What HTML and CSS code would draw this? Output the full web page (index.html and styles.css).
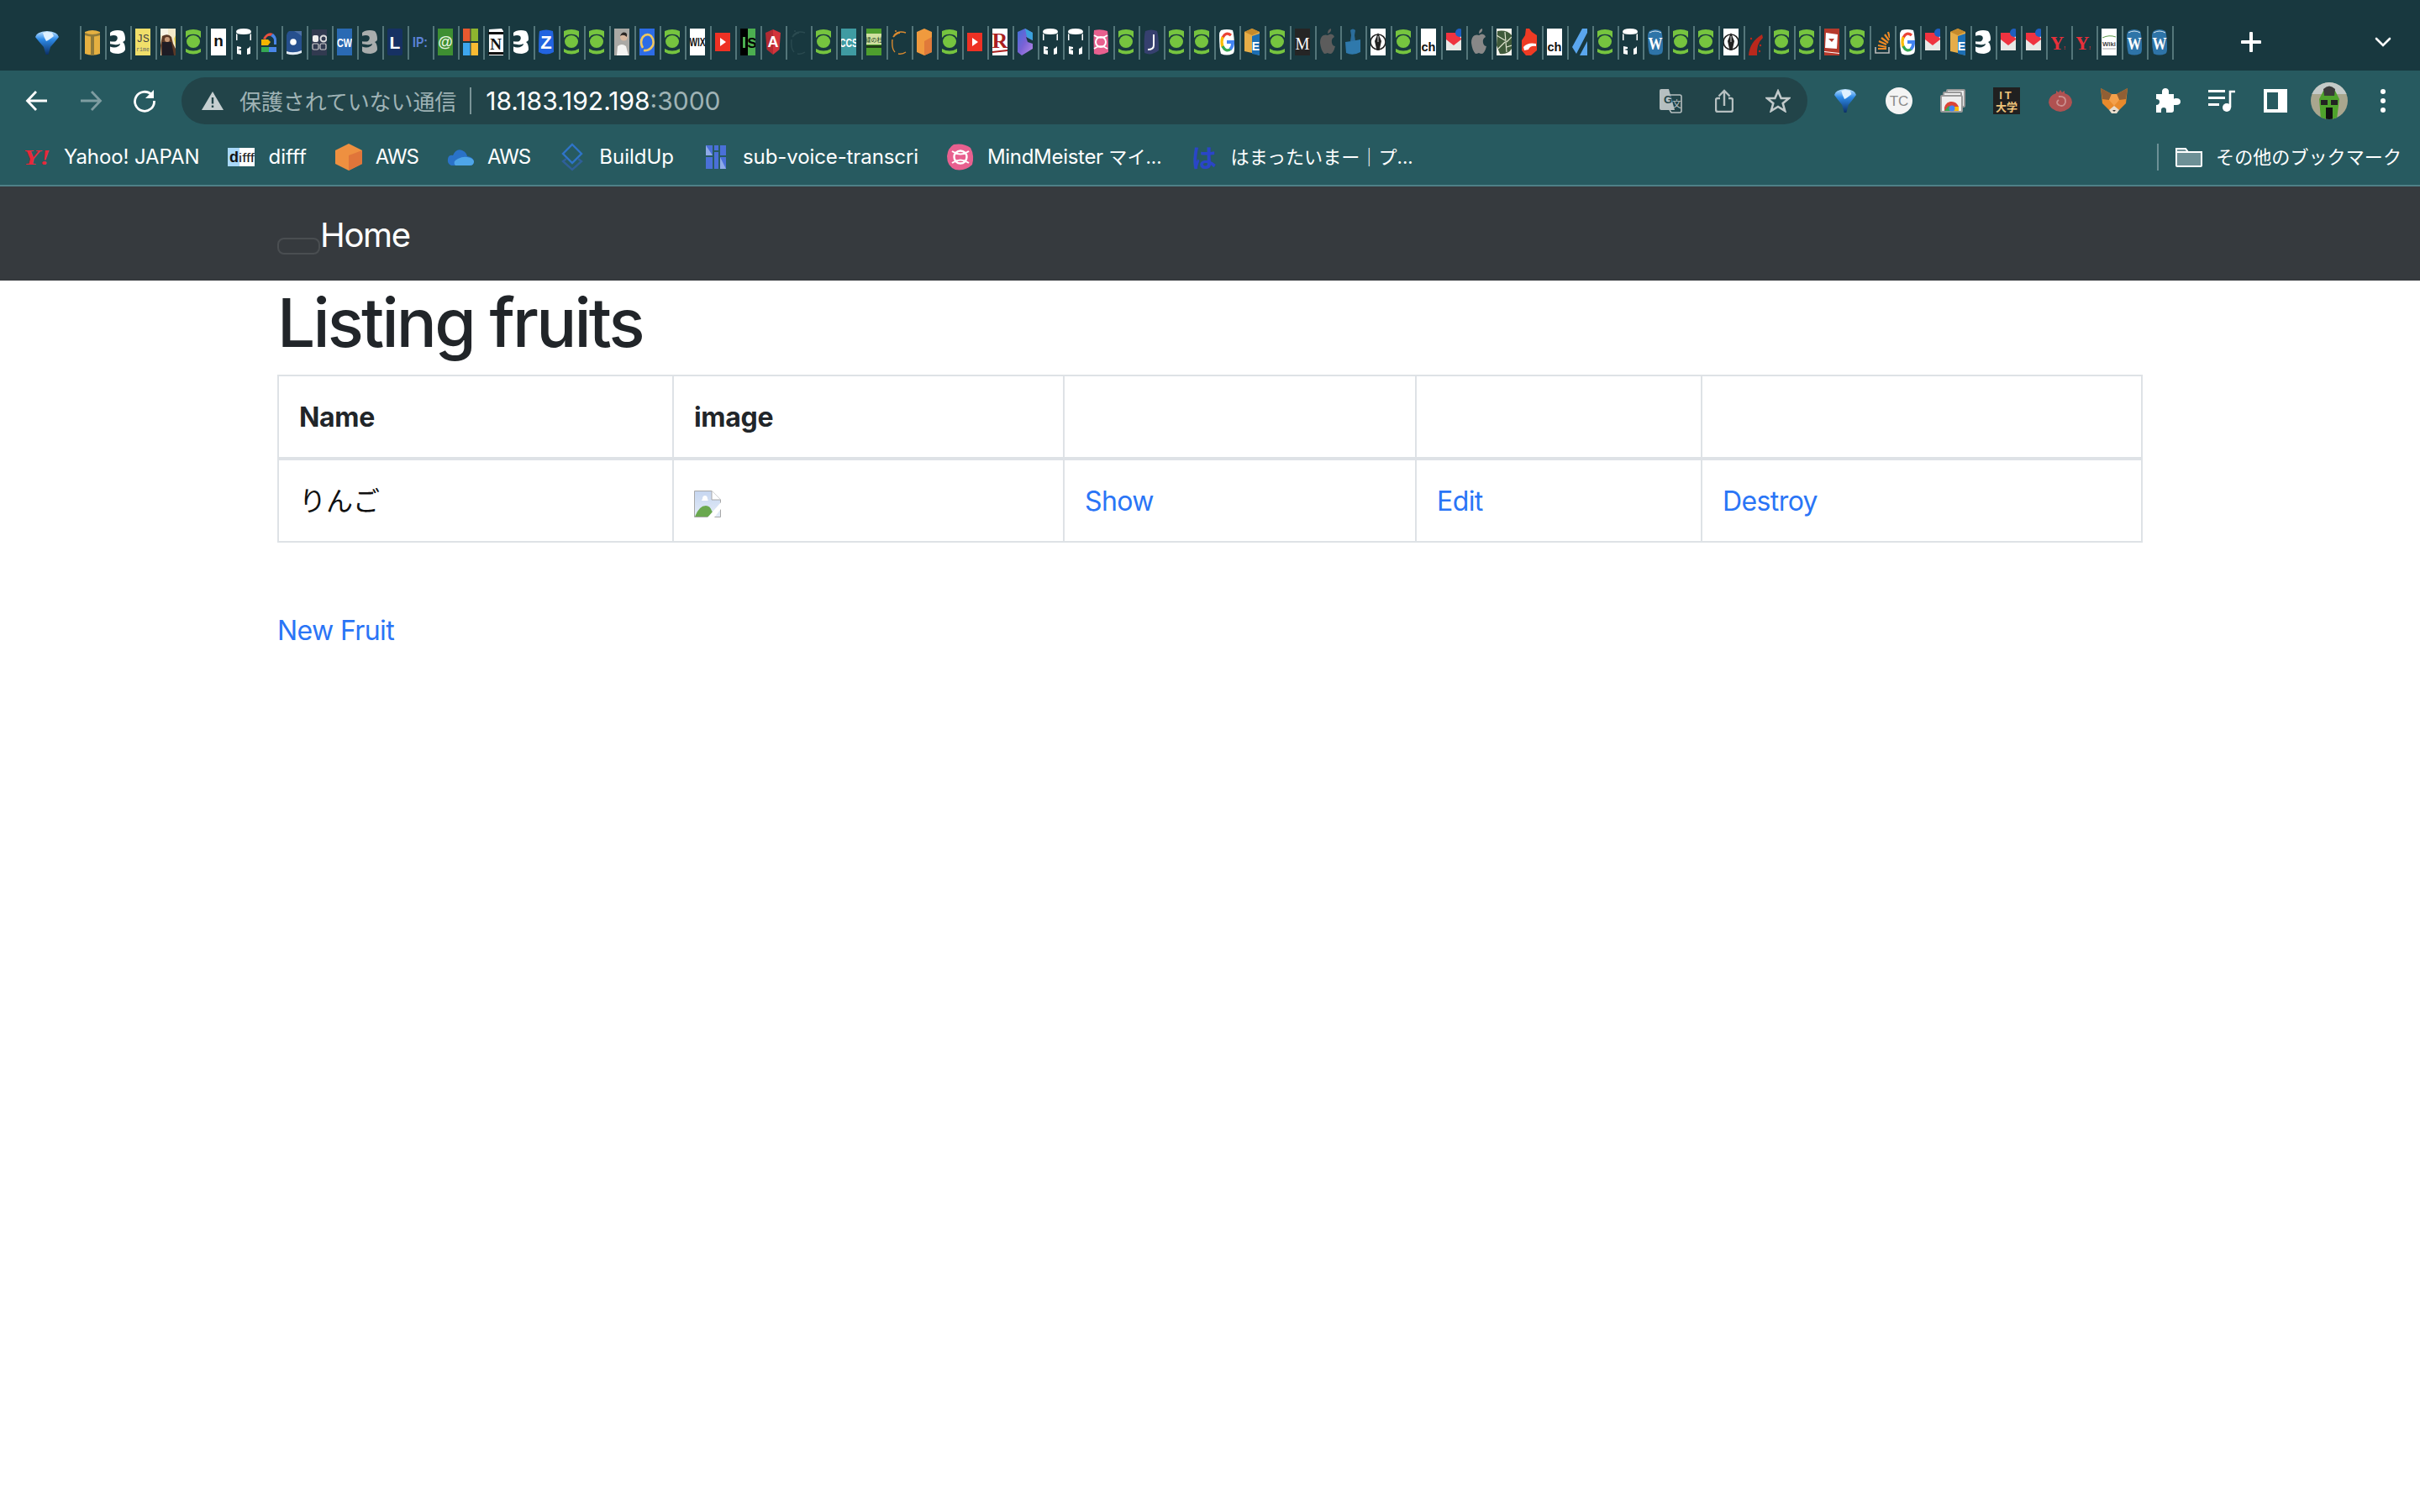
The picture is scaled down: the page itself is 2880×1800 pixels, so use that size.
FILE: index.html
```html
<!DOCTYPE html>
<html lang="ja">
<head>
<meta charset="utf-8">
<title>Listing fruits</title>
<link rel="stylesheet" href="styles.css">
</head>
<body>
<svg class="defs" aria-hidden="true">
<defs>
<linearGradient id="gemG" x1="0" y1="0" x2="0" y2="1"><stop offset="0" stop-color="#bfe3ff"/><stop offset=".35" stop-color="#2e8be8"/><stop offset="1" stop-color="#0b2f66"/></linearGradient>
<linearGradient id="bingG" x1="0" y1="0" x2="1" y2="1"><stop offset="0" stop-color="#3f6fd8"/><stop offset=".5" stop-color="#7a62d6"/><stop offset="1" stop-color="#b78ae6"/></linearGradient>
<linearGradient id="docG" x1="0" y1="0" x2="0" y2="1"><stop offset="0" stop-color="#c6d6f0"/><stop offset="1" stop-color="#e4ecf8"/></linearGradient>
<symbol id="gem" viewBox="0 0 28 30"><path fill="url(#gemG)" d="M0 8Q1 2 14 1Q27 2 28 8Q25 12 18 20L15.5 29H12.5L10 20Q3 12 0 8Z"/><path fill="#dff1ff" d="M9 3Q14 1 20 3L22 7Q16 12 13 13Q10 8 9 3Z"/></symbol>
<symbol id="box" viewBox="0 0 18 32"><path fill="#e5b041" d="M0 4Q9 0 18 4V30Q9 33 0 30Z"/><path fill="#8f7a3a" d="M0 5Q9 9 18 5V8Q14 9 11 9.500V32H7V9.500Q4 9 0 8Z"/></symbol>
<symbol id="three" viewBox="0 0 18 32"><path fill="currentColor" d="M3 3Q9 1 15 3Q18 6 18 13Q18 15 15 16Q18 18 18 25Q17 29 10 30Q2 30 0 27V5Q1 4 3 3Z"/><path fill="#18383f" d="M-1 9Q5 7 8 9Q10 12 7 15Q4 16 -1 15ZM-1 21Q5 24 10 21Q12 20 12 18Q8 20 5 19L-1 18Z"/></symbol>
<symbol id="js" viewBox="0 0 18 32"><rect width="18" height="32" fill="#f0df6a"/><text class="ft fm" x="9" y="16" font-size="13" fill="#444" text-anchor="middle">JS</text><text class="ft fm" x="9" y="27" font-size="6.500" fill="#666" text-anchor="middle">rime</text></symbol>
<symbol id="photo1" viewBox="0 0 18 32"><rect width="18" height="32" fill="#f2e9c8"/><rect y="0" width="9" height="8" fill="#f8f4e4"/><path fill="#5b3a26" d="M2 9Q9 5 13 10L15 18L18 24V32H1L0 20Z"/><path fill="#1e1c24" d="M2 16H13L16 32H2Z"/><circle cx="8" cy="13" r="3" fill="#c89a78"/><path fill="#e8d048" d="M16 12L18 22V8Z"/></symbol>
<symbol id="frog" viewBox="0 0 18 32"><path fill="#76c43f" d="M0 3Q9-1 18 3V11L15 8Q9 5.500 3 8L0 11Z"/><ellipse cx="9" cy="15.500" rx="8" ry="7.500" fill="#76c43f"/><path fill="#76c43f" d="M0 24Q9 29 18 24V28Q9 33 0 28Z"/></symbol>
<symbol id="n" viewBox="0 0 18 32"><rect width="18" height="32" fill="#fff"/><text class="ft fb" x="9" y="21" font-size="19" fill="#111" text-anchor="middle">n</text></symbol>
<symbol id="gh" viewBox="0 0 18 32"><path fill="#fff" d="M0 4Q0 0 9 0Q18 0 18 4Q18 7 9 7Q0 7 0 4Z"/><path fill="#fff" d="M0 6L1.500 7V14H0ZM16.500 7L18 6V14H16.500ZM1 21L6 22V24L2 25L6 26V31L1 30ZM17 21V30L13 31V24Q15 24 17 21Z"/></symbol>
<symbol id="gcloud" viewBox="0 0 18 32"><path fill="#e8503f" d="M2 12Q7 3 14 6L11 9Q7 8 5 13Z"/><path fill="#4a86e8" d="M14 6Q18 9 18 14V19H15V14Q15 11 11 9Z"/><path fill="#f4b400" d="M0 13H8L11 16L8 20H0Z"/><path fill="#34a853" d="M0 22H9V28H0Z"/><path fill="#4a86e8" d="M9 22H18V28H9Z"/></symbol>
<symbol id="ring6" viewBox="0 0 18 32"><path fill="#26508e" d="M3 3H18V28Q9 32 0 28V8Q0 5 3 3Z"/><path fill="#e6eef6" d="M0 27Q9 30 18 26V29Q9 33 0 30Z"/><path fill="#4c6fa5" d="M9 3H18V9Q13 5 9 3Z"/><circle cx="8" cy="16" r="3.800" fill="#fff"/></symbol>
<symbol id="qs" viewBox="0 0 18 32"><rect y="1" width="18" height="31" fill="#313a50"/><rect x="1" y="8" width="7" height="8" rx="2" fill="#eee"/><circle cx="14" cy="12" r="3.500" fill="none" stroke="#ddd" stroke-width="2"/><rect x="1" y="18" width="7" height="7" rx="1.500" fill="none" stroke="#ccc" stroke-width="1.200"/><rect x="10" y="18" width="7" height="7" rx="1.500" fill="none" stroke="#ccc" stroke-width="1.200"/></symbol>
<symbol id="cw" viewBox="0 0 18 32"><rect width="18" height="32" fill="#2a6ab4"/><text class="ft fb" x="9" y="22" font-size="15" fill="#fff" text-anchor="middle" textLength="18" lengthAdjust="spacingAndGlyphs">CW</text></symbol>
<symbol id="l" viewBox="0 0 18 32"><rect width="18" height="32" rx="2" fill="#163163"/><text class="ft fb" x="9" y="24" font-size="21" fill="#fff" text-anchor="middle">L</text></symbol>
<symbol id="ip" viewBox="0 0 18 32"><text class="ft fb" x="9" y="22" font-size="17" fill="#5b82d8" text-anchor="middle" textLength="18" lengthAdjust="spacingAndGlyphs">IP:</text></symbol>
<symbol id="at" viewBox="0 0 18 32"><rect width="18" height="32" fill="#3e8f32"/><text class="ft fb" x="9" y="22" font-size="18" fill="#e6f3df" text-anchor="middle">@</text></symbol>
<symbol id="ms" viewBox="0 0 18 32"><rect width="8.500" height="15" fill="#e8592f"/><rect x="9.500" width="8.500" height="15" fill="#8fb52f"/><rect y="17" width="8.500" height="15" fill="#3ea6ee"/><rect x="9.500" y="17" width="8.500" height="15" fill="#f8bb33"/></symbol>
<symbol id="notion" viewBox="0 0 18 32"><path fill="#fff" d="M1 1L16 0L18 3V32H1Z"/><path fill="#111" d="M0 4H18V7H0ZM0 28H18V31H0Z"/><text class="ft fs" x="9" y="25" font-size="19" fill="#111" text-anchor="middle" font-weight="700">N</text></symbol>
<symbol id="z" viewBox="0 0 18 32"><path fill="#2264e0" d="M1 3Q9 0 17 3Q18 8 18 28Q9 33 0 28Q0 8 1 3Z"/><text class="ft fb" x="9" y="24" font-size="22" fill="#fff" text-anchor="middle">Z</text></symbol>
<symbol id="person" viewBox="0 0 18 32"><rect width="18" height="32" fill="#aaa9a5"/><path fill="#f4f4f2" d="M3 32L4 21Q9 17 14 21L17 32Z"/><circle cx="11.500" cy="10" r="4.500" fill="#d8b8a0"/><path fill="#2a2624" d="M7 9Q9 3 14 5Q16 7 15 10Q11 6 7 9Z"/></symbol>
<symbol id="chat" viewBox="0 0 18 32"><rect width="18" height="32" fill="#2d6ce6"/><path fill="none" stroke="#efc75e" stroke-width="2.600" d="M4 23Q0 16 4 10Q9 5 14 9Q18 14 16 20Q12 27 5 26"/></symbol>
<symbol id="wix" viewBox="0 0 18 32"><rect width="18" height="32" fill="#fff"/><text class="ft fb" x="9" y="21" font-size="15" fill="#111" text-anchor="middle" textLength="19" lengthAdjust="spacingAndGlyphs">WIX</text></symbol>
<symbol id="yt" viewBox="0 0 18 32"><rect y="5" width="18" height="22" fill="#ee3124"/><path fill="#fff" d="M6 11L13 16L6 21Z"/></symbol>
<symbol id="is" viewBox="0 0 18 32"><rect width="9" height="32" fill="#000"/><rect x="9" width="9" height="32" fill="#4caf50"/><rect x="3" y="10" width="3" height="13" fill="#4caf50"/><text class="ft fb" x="14" y="23" font-size="17" fill="#000" text-anchor="middle">S</text></symbol>
<symbol id="ang" viewBox="0 0 18 32"><path fill="#d3343c" d="M9 1L18 5L16.500 25L9 31Z"/><path fill="#b32a32" d="M9 1L0 5L1.500 25L9 31Z"/><text class="ft fb" x="9" y="22" font-size="18" fill="#fff" text-anchor="middle">A</text></symbol>
<symbol id="moon" viewBox="0 0 18 32"><path fill="none" stroke="currentColor" stroke-width="1.400" d="M3 8Q8 2 17 5M1 13Q0 24 4 28M8 30Q13 31 17 28"/><circle cx="5" cy="3" r="1" fill="currentColor"/><path fill="none" stroke="currentColor" stroke-width="2" d="M2 10Q6 5 10 5"/></symbol>
<symbol id="cc" viewBox="0 0 18 32"><rect width="18" height="32" fill="#3f9ba2"/><text class="ft fb" x="9" y="22" font-size="15" fill="#fff" text-anchor="middle" textLength="22" lengthAdjust="spacingAndGlyphs">CCS</text></symbol>
<symbol id="book" viewBox="0 0 18 32"><rect width="18" height="32" fill="#4e9e2e"/><rect y="6" width="18" height="13" fill="#cfe0a0"/><rect y="20" width="18" height="3" fill="#1f3c16"/><text class="ft fc" x="9" y="16" font-size="7" fill="#20401a" text-anchor="middle">緑の杜</text></symbol>
<symbol id="orange" viewBox="0 0 18 32"><path fill="#f09a3e" d="M9 0L18 4V28L9 32L0 28V4Z"/><path fill="#e07a3a" d="M9 15L18 10V28L9 32Z"/></symbol>
<symbol id="r" viewBox="0 0 18 32"><rect width="18" height="32" fill="#fff"/><text class="ft fs" x="9" y="23" font-size="26" fill="#a91f1f" font-weight="700" text-anchor="middle">R</text><path fill="#a91f1f" d="M0 27L18 25V27L0 29Z"/></symbol>
<symbol id="bing" viewBox="0 0 18 32"><path fill="url(#bingG)" d="M9 0L18 5V14L10 10L12 16L18 18V24L5 32L0 28V4Z"/><path fill="#3aa0dc" d="M9 0L18 5V14L11 10Z"/></symbol>
<symbol id="mm" viewBox="0 0 18 32"><path fill="#e8608f" d="M1 2Q9 0 17 3Q18 8 18 28Q9 33 1 30Q0 10 1 2Z"/><circle cx="9" cy="16" r="6" fill="none" stroke="#fff" stroke-width="2"/><path fill="none" stroke="#fff" stroke-width="1.600" d="M1 8Q9 14 17 8M1 24Q9 18 17 24"/></symbol>
<symbol id="j" viewBox="0 0 18 32"><path fill="#36406f" d="M2 3Q9 0 16 3Q18 8 18 26Q9 33 1 29Q0 10 2 3Z"/><path fill="none" stroke="#fff" stroke-width="2" d="M12 7V20Q12 25 5 25"/></symbol>
<symbol id="g" viewBox="0 0 18 32"><path fill="#fff" d="M2 2Q9 0 16 2Q18 8 18 24Q18 29 16 30Q9 33 2 30Q0 24 0 8Q0 4 2 2Z"/><path fill="none" stroke="#ea4335" stroke-width="3.200" d="M14 8Q8 3 4 11"/><path fill="none" stroke="#fbbc05" stroke-width="3.200" d="M4 10Q2 16 4 22"/><path fill="none" stroke="#34a853" stroke-width="3.200" d="M4 21Q8 29 14 24"/><path fill="#4285f4" d="M9 14H18V18Q17 24 14 26L12 23Q14 21 14 18H9Z"/></symbol>
<symbol id="ie" viewBox="0 0 18 32"><path fill="#e6ad48" d="M9 0L18 4V32L9 29L0 27V4Z"/><path fill="#c58a2c" d="M9 8L18 4L9 0L0 4Z"/><path fill="#1d6fb4" d="M9 9L18 6V32L9 30Z"/><text class="ft fb" x="13.500" y="26" font-size="14" fill="#fff" text-anchor="middle">E</text></symbol>
<symbol id="m" viewBox="0 0 18 32"><rect width="18" height="32" fill="#252525"/><text class="ft fs" x="9" y="25" font-size="20" fill="#fff" text-anchor="middle" textLength="17" lengthAdjust="spacingAndGlyphs">M</text></symbol>
<symbol id="apple" viewBox="0 0 18 32"><path fill="currentColor" d="M9 8Q13 5 16 8L17 10Q13 12 14 17Q15 21 18 21Q16 29 13 30Q10 30 9 29Q7 30 5 30Q1 26 0 17Q0 10 4 8Q7 7 9 8ZM9 6Q9 1 13 0Q14 4 9 6Z"/></symbol>
<symbol id="ink" viewBox="0 0 18 32"><path fill="#2b6d9c" d="M6 2Q9-1 12 2L11 8L12 15H6L7 8Z"/><path fill="#2f79ac" d="M0 16Q9 15 18 13V28Q9 33 1 29Z"/></symbol>
<symbol id="pen" viewBox="0 0 18 32"><rect width="18" height="32" fill="#fff"/><circle cx="9" cy="16" r="9" fill="none" stroke="#222" stroke-width="1.600"/><path fill="#222" d="M9 5L13 15L10.500 26H7.500L5 15Z"/><path fill="#fff" d="M8.600 9H9.400V16H8.600Z"/></symbol>
<symbol id="ch" viewBox="0 0 18 32"><rect width="18" height="32" fill="#fff"/><text class="ft fb" x="9" y="27" font-size="15" fill="#111" text-anchor="middle" textLength="17" lengthAdjust="spacingAndGlyphs">ch</text></symbol>
<symbol id="gmail" viewBox="0 0 18 32"><path fill="#e8e8e6" d="M0 5H18V26H0Z"/><path fill="#ef3340" d="M0 5H12L18 12V13L9 20L0 13Z"/><circle cx="16" cy="5" r="5" fill="#1f5fc0"/></symbol>
<symbol id="plant" viewBox="0 0 18 32"><rect width="18" height="32" fill="#f4f3ec"/><path fill="#3f5a3a" d="M1 3Q12 1 18 8V24Q14 31 4 30L0 20Z"/><path fill="none" stroke="#e0e4d0" stroke-width="1.200" d="M0 8L10 14M2 24L10 16M10 4L12 28M18 10L12 16M18 20L12 22"/></symbol>
<symbol id="red" viewBox="0 0 18 32"><path fill="#ee3b24" d="M5 0H9L12 4L18 8V26L11 32H5L0 26V14L4 8Z"/><path fill="#fff" d="M2 22Q7 16 17 18V21Q10 20 8 25L3 26Z"/></symbol>
<symbol id="slash" viewBox="0 0 18 32"><path fill="#5aa6ee" d="M12 0H18V5L5 30L0 22ZM18 15V32H9Z"/></symbol>
<symbol id="w" viewBox="0 0 18 32"><path fill="#2e74a8" d="M2 3Q9-1 16 3Q18 8 18 24Q18 29 16 30Q9 33 2 30Q0 24 0 8Q0 5 2 3Z"/><path fill="none" stroke="#fff" stroke-width=".8" d="M2 5Q9 1 16 5"/><text class="ft fs" x="9" y="25" font-size="22" font-weight="700" fill="#fff" text-anchor="middle" textLength="17" lengthAdjust="spacingAndGlyphs">W</text></symbol>
<symbol id="rails" viewBox="0 0 18 32"><path fill="#b9281c" d="M0 32Q1 16 16 7L17 11Q9 18 10 32Z"/><circle cx="3" cy="12" r="1.200" fill="#b9281c"/><circle cx="14" cy="20" r="1.200" fill="#b9281c"/><circle cx="13" cy="27" r="1.200" fill="#b9281c"/></symbol>
<symbol id="card" viewBox="0 0 18 32"><rect width="18" height="32" fill="#b53a2c"/><path fill="#fff" d="M2 5L16 7L15 24L1 23Z"/><path fill="#b53a2c" d="M5 12H12L9 16Z"/><path fill="#fff" d="M0 27L18 29V30L0 28Z"/></symbol>
<symbol id="so" viewBox="0 0 18 32"><path fill="none" stroke="#f08a24" stroke-width="2.200" d="M4 24H14M4 20L14 22M5 15L14 19M8 11L16 17M12 7L17 14M16 4L18 11"/><path fill="none" stroke="#bbb" stroke-width="1.600" d="M1 22V29H17V22"/></symbol>
<symbol id="yj" viewBox="0 0 18 32"><text class="ft fs" x="7" y="25" font-size="23" font-weight="700" fill="#e8303a" text-anchor="middle">Y</text><text class="ft fs" x="16" y="25" font-size="6" font-weight="700" fill="#e8303a" text-anchor="middle">!</text></symbol>
<symbol id="wiki" viewBox="0 0 18 32"><rect width="18" height="32" fill="#fff"/><path fill="none" stroke="#5a9a48" stroke-width="1" d="M1 11Q9 7 17 10"/><text class="ft fb" x="9" y="21" font-size="7" fill="#444" text-anchor="middle" textLength="16" lengthAdjust="spacingAndGlyphs">Wiki</text><path fill="none" stroke="#aaa" stroke-width="1" d="M1 24H17"/></symbol>
</defs>
</svg>

<header class="chrome">
  <div class="tabstrip">
    <svg class="gem-fav"><use href="#gem"/></svg>
    <div class="tabs">
      <div class="tab"><svg class="fav"><use href="#box"/></svg></div>
      <div class="tab"><svg class="fav white"><use href="#three"/></svg></div>
      <div class="tab"><svg class="fav"><use href="#js"/></svg></div>
      <div class="tab"><svg class="fav"><use href="#photo1"/></svg></div>
      <div class="tab"><svg class="fav"><use href="#frog"/></svg></div>
      <div class="tab"><svg class="fav"><use href="#n"/></svg></div>
      <div class="tab"><svg class="fav"><use href="#gh"/></svg></div>
      <div class="tab"><svg class="fav"><use href="#gcloud"/></svg></div>
      <div class="tab"><svg class="fav"><use href="#ring6"/></svg></div>
      <div class="tab"><svg class="fav"><use href="#qs"/></svg></div>
      <div class="tab"><svg class="fav"><use href="#cw"/></svg></div>
      <div class="tab"><svg class="fav grey"><use href="#three"/></svg></div>
      <div class="tab"><svg class="fav"><use href="#l"/></svg></div>
      <div class="tab"><svg class="fav"><use href="#ip"/></svg></div>
      <div class="tab"><svg class="fav"><use href="#at"/></svg></div>
      <div class="tab"><svg class="fav"><use href="#ms"/></svg></div>
      <div class="tab"><svg class="fav"><use href="#notion"/></svg></div>
      <div class="tab"><svg class="fav white"><use href="#three"/></svg></div>
      <div class="tab"><svg class="fav"><use href="#z"/></svg></div>
      <div class="tab"><svg class="fav"><use href="#frog"/></svg></div>
      <div class="tab"><svg class="fav"><use href="#frog"/></svg></div>
      <div class="tab"><svg class="fav"><use href="#person"/></svg></div>
      <div class="tab"><svg class="fav"><use href="#chat"/></svg></div>
      <div class="tab"><svg class="fav"><use href="#frog"/></svg></div>
      <div class="tab"><svg class="fav"><use href="#wix"/></svg></div>
      <div class="tab"><svg class="fav"><use href="#yt"/></svg></div>
      <div class="tab"><svg class="fav"><use href="#is"/></svg></div>
      <div class="tab"><svg class="fav"><use href="#ang"/></svg></div>
      <div class="tab"><svg class="fav dim"><use href="#moon"/></svg></div>
      <div class="tab"><svg class="fav"><use href="#frog"/></svg></div>
      <div class="tab"><svg class="fav"><use href="#cc"/></svg></div>
      <div class="tab"><svg class="fav"><use href="#book"/></svg></div>
      <div class="tab"><svg class="fav amber"><use href="#moon"/></svg></div>
      <div class="tab"><svg class="fav"><use href="#orange"/></svg></div>
      <div class="tab"><svg class="fav"><use href="#frog"/></svg></div>
      <div class="tab"><svg class="fav"><use href="#yt"/></svg></div>
      <div class="tab"><svg class="fav"><use href="#r"/></svg></div>
      <div class="tab"><svg class="fav"><use href="#bing"/></svg></div>
      <div class="tab"><svg class="fav"><use href="#gh"/></svg></div>
      <div class="tab"><svg class="fav"><use href="#gh"/></svg></div>
      <div class="tab"><svg class="fav"><use href="#mm"/></svg></div>
      <div class="tab"><svg class="fav"><use href="#frog"/></svg></div>
      <div class="tab"><svg class="fav"><use href="#j"/></svg></div>
      <div class="tab"><svg class="fav"><use href="#frog"/></svg></div>
      <div class="tab"><svg class="fav"><use href="#frog"/></svg></div>
      <div class="tab"><svg class="fav"><use href="#g"/></svg></div>
      <div class="tab"><svg class="fav"><use href="#ie"/></svg></div>
      <div class="tab"><svg class="fav"><use href="#frog"/></svg></div>
      <div class="tab"><svg class="fav"><use href="#m"/></svg></div>
      <div class="tab"><svg class="fav apple-d"><use href="#apple"/></svg></div>
      <div class="tab"><svg class="fav"><use href="#ink"/></svg></div>
      <div class="tab"><svg class="fav"><use href="#pen"/></svg></div>
      <div class="tab"><svg class="fav"><use href="#frog"/></svg></div>
      <div class="tab"><svg class="fav"><use href="#ch"/></svg></div>
      <div class="tab"><svg class="fav"><use href="#gmail"/></svg></div>
      <div class="tab"><svg class="fav apple-g"><use href="#apple"/></svg></div>
      <div class="tab"><svg class="fav"><use href="#plant"/></svg></div>
      <div class="tab"><svg class="fav"><use href="#red"/></svg></div>
      <div class="tab"><svg class="fav"><use href="#ch"/></svg></div>
      <div class="tab"><svg class="fav"><use href="#slash"/></svg></div>
      <div class="tab"><svg class="fav"><use href="#frog"/></svg></div>
      <div class="tab"><svg class="fav"><use href="#gh"/></svg></div>
      <div class="tab"><svg class="fav"><use href="#w"/></svg></div>
      <div class="tab"><svg class="fav"><use href="#frog"/></svg></div>
      <div class="tab"><svg class="fav"><use href="#frog"/></svg></div>
      <div class="tab"><svg class="fav"><use href="#pen"/></svg></div>
      <div class="tab"><svg class="fav"><use href="#rails"/></svg></div>
      <div class="tab"><svg class="fav"><use href="#frog"/></svg></div>
      <div class="tab"><svg class="fav"><use href="#frog"/></svg></div>
      <div class="tab"><svg class="fav"><use href="#card"/></svg></div>
      <div class="tab"><svg class="fav"><use href="#frog"/></svg></div>
      <div class="tab"><svg class="fav"><use href="#so"/></svg></div>
      <div class="tab"><svg class="fav"><use href="#g"/></svg></div>
      <div class="tab"><svg class="fav"><use href="#gmail"/></svg></div>
      <div class="tab"><svg class="fav"><use href="#ie"/></svg></div>
      <div class="tab"><svg class="fav white"><use href="#three"/></svg></div>
      <div class="tab"><svg class="fav"><use href="#gmail"/></svg></div>
      <div class="tab"><svg class="fav"><use href="#gmail"/></svg></div>
      <div class="tab"><svg class="fav"><use href="#yj"/></svg></div>
      <div class="tab"><svg class="fav"><use href="#yj"/></svg></div>
      <div class="tab"><svg class="fav"><use href="#wiki"/></svg></div>
      <div class="tab"><svg class="fav"><use href="#w"/></svg></div>
      <div class="tab tab-last"><svg class="fav"><use href="#w"/></svg></div>
    </div>
    <div class="strip-btn plus"><svg width="24" height="24" viewBox="0 0 24 24"><path d="M12 1.500V22.500M1.500 12H22.500" stroke="#fff" stroke-width="4" stroke-linecap="round"/></svg></div>
    <div class="strip-btn chev"><svg width="20" height="12" viewBox="0 0 20 12"><path d="M2 2L10 10L18 2" fill="none" stroke="#fff" stroke-width="2.600" stroke-linecap="round"/></svg></div>
  </div>

  <div class="toolbar">
    <div class="tb-btn"><svg width="28" height="26" viewBox="0 0 28 26"><path d="M26 13H3M13 2L2.500 13L13 24" fill="none" stroke="#fff" stroke-width="2.800"/></svg></div>
    <div class="tb-btn"><svg width="28" height="26" viewBox="0 0 28 26"><path d="M2 13H25M15 2L25.500 13L15 24" fill="none" stroke="#7f9da1" stroke-width="2.800"/></svg></div>
    <div class="tb-btn"><svg width="28" height="28" viewBox="0 0 28 28"><path d="M22.500 7A11.500 11.500 0 1 0 25.500 14" fill="none" stroke="#fff" stroke-width="2.800"/><path d="M25 1V11H15Z" fill="#fff"/></svg></div>
    <div class="omnibox">
      <svg class="warn" width="26" height="22" viewBox="0 0 26 22"><path d="M13 0L26 22H0Z" fill="#c6cfd0"/><path d="M11.800 7H14.200V14.500H11.800ZM11.800 16.500H14.200V19H11.800Z" fill="#224449"/></svg>
      <span class="insecure">保護されていない通信</span>
      <span class="omni-sep"></span>
      <span class="url">18.183.192.198<span class="port">:3000</span></span>
      <span class="omni-right">
        <span class="omni-btn"><svg width="28" height="30" viewBox="0 0 28 30"><path d="M1 3Q1 1 3 1H12L19 26H3Q1 26 1 24Z" fill="#b6bfc0"/><path d="M12 8H25Q27 8 27 10V27Q27 29 25 29H15L13 26" fill="none" stroke="#b6bfc0" stroke-width="1.600"/><text class="ft fb" x="6" y="18" font-size="13" fill="#224449">G</text><text class="ft fc" x="16" y="23" font-size="11" fill="#b6bfc0">文</text></svg></span>
        <span class="omni-btn"><svg width="22" height="28" viewBox="0 0 22 28"><path d="M11 20V2M4.500 8.500L11 2L17.500 8.500M6 11H3Q1 11 1 13V24Q1 27 3 27H19Q21 27 21 24V13Q21 11 19 11H16" fill="none" stroke="#b6bfc0" stroke-width="2.400"/></svg></span>
        <span class="omni-btn"><svg width="30" height="28" viewBox="0 0 30 28"><path d="M15 2.500L18.700 11H28L20.700 17L23.200 26L15 21L6.800 26L9.300 17L2 11H11.300Z" fill="none" stroke="#c2cacb" stroke-width="2.600"/></svg></span>
      </span>
    </div>
    <div class="ext-group">
      <div class="tb-btn"><svg width="26" height="30" viewBox="0 0 28 30" preserveAspectRatio="none"><use href="#gem"/></svg></div>
      <div class="tb-btn"><svg width="32" height="32" viewBox="0 0 32 32"><circle cx="16" cy="16" r="16" fill="#f4f4f4"/><text class="ft fr" x="16" y="22" font-size="17" fill="#8a8a8a" text-anchor="middle">TC</text></svg></div>
      <div class="tb-btn"><svg width="30" height="28" viewBox="0 0 30 28"><rect x="8" y="1" width="21" height="20" rx="1" fill="#eee" stroke="#999" stroke-width="2"/><rect x="4" y="4" width="21" height="20" rx="1" fill="#eee" stroke="#999" stroke-width="2"/><rect x="1" y="8" width="25" height="19" rx="1" fill="#eee" stroke="#999" stroke-width="2"/><path d="M5 26A9 9 0 0 1 12 15Q19 14 22 21H16L12 26Z" fill="#db4437"/><path d="M5 26H12L14 23L10 20Z" fill="#34a853"/><path d="M16 21H22L22 26H12Z" fill="#fbbc05"/><circle cx="14" cy="23" r="3.500" fill="#4285f4"/></svg></div>
      <div class="tb-btn"><svg width="32" height="32" viewBox="0 0 32 32"><rect width="32" height="32" fill="#202020"/><text class="ft fb" x="16" y="14" font-size="13" fill="#eec47a" text-anchor="middle" letter-spacing="3">IT</text><text class="ft fc" x="16" y="28" font-size="13" fill="#eec47a" text-anchor="middle" font-weight="700">大学</text></svg></div>
      <div class="tb-btn"><svg class="tomato" width="28" height="26" viewBox="0 0 28 26"><path d="M14 0L16 3L19 1L19 4Q28 7 28 15Q27 24 14 26Q1 24 0 15Q0 7 9 4L9 1L12 3Z" fill="#c9504f"/><path d="M12 8Q21 7 20 15Q18 21 12 18Q8 15 12 12" fill="none" stroke="#e89a98" stroke-width="1.800"/></svg></div>
      <div class="tb-btn"><svg width="32" height="30" viewBox="0 0 32 30"><path d="M0 0L13 7H19L32 0L30 18L22 26H10L2 18Z" fill="#e88a2c"/><path d="M0 0L13 7L10 14L2 13ZM32 0L19 7L22 14L30 13Z" fill="#915f34"/><path d="M10 14L16 21L22 14L19 7H13Z" fill="#f4a04a"/><path d="M10 26L13 30H19L22 26L16 21Z" fill="#e8dccc"/><path d="M14 26H18L16 28Z" fill="#333"/></svg></div>
      <div class="tb-btn"><svg width="30" height="30" viewBox="0 0 30 30"><path fill="#fff" d="M12 0Q15 0 16 3V7H22V13Q22 12 25 12Q30 12 30 16Q30 20 25 20H22V26Q22 29 19 29H13V26Q13 23 10 23Q7 23 7 26V29H1V20Q5 20 5 16Q5 13 1 13V7H8V3Q9 0 12 0Z"/></svg></div>
      <div class="tb-btn"><svg width="32" height="26" viewBox="0 0 32 26"><path d="M0 1.500H20M0 9.500H20M0 17.500H13" stroke="#fff" stroke-width="3"/><circle cx="22" cy="21" r="5" fill="#fff"/><path d="M26 21V2H32" fill="none" stroke="#fff" stroke-width="2.600"/></svg></div>
      <div class="tb-btn"><svg width="28" height="28" viewBox="0 0 28 28"><path fill="#fff" fill-rule="evenodd" d="M0 0H28V28H0ZM4 4V24H17V4Z"/></svg></div>
      <div class="tb-btn"><svg width="44" height="44" viewBox="0 0 44 44"><defs><clipPath id="av"><circle cx="22" cy="22" r="22"/></clipPath></defs><g clip-path="url(#av)"><rect width="44" height="44" fill="#a9a68e"/><rect y="0" width="44" height="14" fill="#c4cac8"/><path d="M12 44L10 20L15 10Q22 4 29 10L34 20L31 44Z" fill="#4fa32c"/><path d="M15 8Q22 1 29 8L28 16H16Z" fill="#3a3a3a"/><path d="M12 21H20V27H12ZM24 21H32V27H24Z" fill="#222"/><rect x="18" y="30" width="8" height="14" fill="#111"/></g></svg></div>
      <div class="tb-btn"><svg width="6" height="28" viewBox="0 0 6 28"><circle cx="3" cy="3" r="3" fill="#fff"/><circle cx="3" cy="14" r="3" fill="#fff"/><circle cx="3" cy="25" r="3" fill="#fff"/></svg></div>
    </div>
  </div>

  <nav class="bookmarks">
    <a class="bm"><svg class="bm-ic" viewBox="0 0 32 32"><text class="ft fs" x="0" y="25" font-size="26" font-weight="700" font-style="italic" fill="#e8283a" textLength="32" lengthAdjust="spacingAndGlyphs">Y!</text></svg><span class="t-yahoo">Yahoo! JAPAN</span></a>
    <a class="bm"><svg class="bm-ic" viewBox="0 0 32 32"><rect y="5" width="32" height="22" fill="#fff"/><rect y="5" width="14" height="22" fill="#a8d8f8"/><text class="ft fb" x="2" y="22" font-size="18" fill="#111">d</text><text class="ft fr" x="13" y="22" font-size="14" fill="#222" textLength="19" lengthAdjust="spacingAndGlyphs">ifff</text></svg><span>difff</span></a>
    <a class="bm"><svg class="bm-ic" viewBox="0 0 32 32"><path d="M16 0L32 8V24L16 32L0 24V8Z" fill="#ee9040"/><path d="M16 14L32 8V24L16 32Z" fill="#e0753a"/></svg><span class="t-aws">AWS</span></a>
    <a class="bm"><svg class="bm-ic" viewBox="0 0 32 32"><path d="M5 26Q0 24 1 18Q2 13 7 14Q11 5 18 8Q23 10 24 15Q31 16 32 21Q32 26 27 26Z" fill="#2a72c8"/><path d="M10 26Q6 21 13 18Q19 15 24 16Q31 17 32 21Q32 26 27 26Z" fill="#4ea5e8"/></svg><span class="t-aws">AWS</span></a>
    <a class="bm"><svg class="bm-ic" viewBox="0 0 32 32"><path d="M16 1L27 12L16 23L5 12Z" fill="none" stroke="#2f74c8" stroke-width="2.400"/><path d="M9 18L5 21L16 31L27 21L23 18" fill="none" stroke="#2f5f98" stroke-width="2.400"/></svg><span>BuildUp</span></a>
    <a class="bm"><svg class="bm-ic" viewBox="0 0 32 32"><path d="M4 2H12V14H4ZM14 2H19V8H14ZM21 2H28V14H21ZM14 10H19V30H14ZM4 16H12V30H4ZM21 16H28V30H21Z" fill="#4a70d8"/><path d="M4 2L12 14H4ZM21 16L28 30H21Z" fill="#8eaae8"/></svg><span class="t-sub">sub-voice-transcri</span></a>
    <a class="bm"><svg class="bm-ic" viewBox="0 0 32 32"><path d="M8 1Q20-1 28 5Q33 14 30 25Q22 33 10 31Q0 27 0 15Q1 5 8 1Z" fill="#e8608f"/><circle cx="16" cy="16" r="7.500" fill="none" stroke="#fff" stroke-width="2.400"/><path d="M6 9Q16 16 26 9M6 23Q16 16 26 23" fill="none" stroke="#fff" stroke-width="2"/></svg><span class="t-mm">MindMeister <span class="t-jp">マイ...</span></span></a>
    <a class="bm"><svg class="bm-ic" viewBox="0 0 32 32"><text class="ft fc" x="16" y="28" font-size="30" font-weight="700" fill="#2a45c8" text-anchor="middle">は</text></svg><span class="t-jp">はまったいまー｜プ...</span></a>
    <div class="bm-other">
      <span class="bm-sep"></span>
      <a class="bm"><svg class="folder" width="32" height="24" viewBox="0 0 32 24"><path d="M1 22V2H12L15 6H31V22Q31 23 30 23H2Q1 23 1 22Z" fill="#6d9096" stroke="#fff" stroke-width="2"/><path d="M2 6H15" stroke="#fff" stroke-width="2"/><rect x="2" y="7" width="28" height="12" fill="#6d9096"/></svg><span class="t-jp">その他のブックマーク</span></a>
    </div>
  </nav>
</header>

<div class="navbar">
  <div class="container nav-inner">
    <button class="toggler" type="button"></button>
    <a class="brand">Home</a>
  </div>
</div>

<main class="container">
  <h1>Listing fruits</h1>
  <table class="table">
    <colgroup><col class="c1"><col class="c2"><col class="c3"><col class="c4"><col class="c5"></colgroup>
    <thead>
      <tr><th>Name</th><th>image</th><th></th><th></th><th></th></tr>
    </thead>
    <tbody>
      <tr>
        <td class="ja">りんご</td>
        <td><svg class="broken" width="32" height="32" viewBox="0 0 32 32"><path d="M.500.500H21L31.500 11V31.500H.500Z" fill="url(#docG)" stroke="#a8a8a8"/><path d="M21 .500V11H31.500" fill="#fff" stroke="#a8a8a8"/><path d="M1 31Q6 18 14 18Q19 18 21 24L25 31Z" fill="#6aa84f"/><path d="M10 10Q10 6 13 6Q16 6 16 10Q18 12 15 12H10Q8 12 10 10Z" fill="#fff"/><path d="M32 14L16 32H24L32 22Z" fill="#fff"/></svg></td>
        <td><a class="link">Show</a></td>
        <td><a class="link">Edit</a></td>
        <td><a class="link">Destroy</a></td>
      </tr>
    </tbody>
  </table>
  <a class="link new-link">New Fruit</a>
</main>
</body>
</html>
```

FILE: styles.css
```css
* { box-sizing: border-box; }
html, body { margin: 0; padding: 0; background: #fff; }
body { font-family: Inter, "Noto Sans CJK JP", sans-serif; color: #212529; font-size: 32px; line-height: 48px; }
.defs { width: 0; height: 0; position: absolute; }
.ft { font-family: Inter, "Liberation Sans", sans-serif; }
.fb { font-family: "Liberation Sans", sans-serif; font-weight: 700; }
.fm { font-family: "Liberation Mono", monospace; }
.fs { font-family: "Liberation Serif", serif; }
.fr { font-family: "Liberation Sans", sans-serif; }
.fc { font-family: "Noto Sans CJK JP", sans-serif; }

.chrome { display: flex; flex-direction: column; }
.tabstrip { height: 84px; background: #18383f; display: flex; align-items: flex-start; padding-right: 12px; }
.gem-fav { width: 28px; height: 30px; margin: 36px 0 0 42px; flex: none; }
.tabs { display: flex; margin: 31px 0 0 25px; }
.tab { width: 30px; height: 40px; border-left: 2px solid #54767a; padding: 3px 0 0 4px; flex: none; }
.tab-last { width: 32px; border-right: 2px solid #54767a; }
.fav { width: 18px; height: 32px; display: block; overflow: visible; }
.white { color: #fff; }
.grey { color: #a9adad; }
.dim { color: #2a4a50; }
.amber { color: #d98a30; }
.apple-d { color: #5c5c5c; }
.apple-g { color: #888; }
.strip-btn { width: 64px; height: 84px; display: flex; align-items: center; justify-content: center; padding-top: 16px; flex: none; }
.plus { margin-left: 60px; }
.chev { margin-left: auto; }

.toolbar { height: 64px; background: #275a60; display: flex; align-items: center; padding: 8px 12px 0; }
.tb-btn { width: 64px; height: 56px; display: flex; align-items: center; justify-content: center; flex: none; }
.tomato { opacity: .85; }
.omnibox { width: 1935px; height: 56px; margin: 0 13px 0 12px; border-radius: 28px; background: #224449; display: flex; align-items: center; padding-left: 24px; flex: none; }
.warn { flex: none; }
.insecure { font-size: 26px; line-height: 32px; color: #9fb3b5; margin-left: 19px; font-family: "Noto Sans CJK JP", sans-serif; letter-spacing: -.1px; }
.omni-sep { width: 2px; height: 32px; background: #7b9497; margin: 0 17px 0 16px; flex: none; }
.url { font-size: 30px; line-height: 36px; color: #fff; }
.port { color: #9fb3b5; }
.omni-right { margin-left: auto; display: flex; padding-right: 3px; }
.omni-btn { width: 64px; height: 56px; display: flex; align-items: center; justify-content: center; }
.ext-group { display: flex; }

.bookmarks { height: 74px; background: #275a60; border-bottom: 2px solid #4f8087; display: flex; align-items: center; padding: 6px 0 0 28px; gap: 34px; color: #fff; font-size: 24px; line-height: 32px; }
.bm { display: flex; align-items: center; gap: 16px; white-space: nowrap; }
.bm-ic { width: 32px; height: 32px; flex: none; overflow: visible; }
.t-yahoo { letter-spacing: -.1px; }
.t-aws { letter-spacing: -1px; }
.t-sub { letter-spacing: -.1px; }
.t-mm { letter-spacing: -.3px; }
.t-jp { font-size: 22.1px; letter-spacing: 0; }
.bm-other { margin-left: auto; display: flex; align-items: center; padding-right: 22px; }
.bm-sep { width: 2px; height: 32px; background: #6d9096; margin-right: 20px; }
.folder { flex: none; }

.container { width: 2280px; margin: 0 auto; padding: 0 30px; }
.navbar { height: 112px; background: #363a3e; }
.nav-inner { display: flex; align-items: flex-start; height: 112px; }
.toggler { width: 51px; height: 20px; margin-top: 61px; padding: 0; border: 2px solid rgba(255,255,255,.1); border-radius: 8px; background: transparent; flex: none; }
.brand { font-size: 40px; line-height: 60px; color: #fff; margin: 28px 0 0; letter-spacing: -1.3px; }

h1 { font-size: 80px; line-height: 96px; font-weight: 500; margin: 2px 0 14px; color: #212529; letter-spacing: -2.8px; }
.table { width: 2218px; border-collapse: collapse; table-layout: fixed; margin-bottom: 81px; letter-spacing: -.6px; }
.c1 { width: 470px; } .c2 { width: 465px; } .c3 { width: 419px; } .c4 { width: 340px; } .c5 { width: 524px; }
th, td { border: 2px solid #dee2e6; padding: 25px 24px 23px; text-align: left; vertical-align: top; height: 98px; }
thead th { border-bottom-width: 4px; font-weight: 700; letter-spacing: -.3px; }
td.ja { font-family: "Noto Sans CJK JP", sans-serif; font-weight: 400; color: #111; padding-top: 22px; letter-spacing: 0; }
.link { color: #2a75f6; text-decoration: none; }
.broken { display: block; margin-top: 11px; }
.new-link { display: block; letter-spacing: -.6px; }
```
